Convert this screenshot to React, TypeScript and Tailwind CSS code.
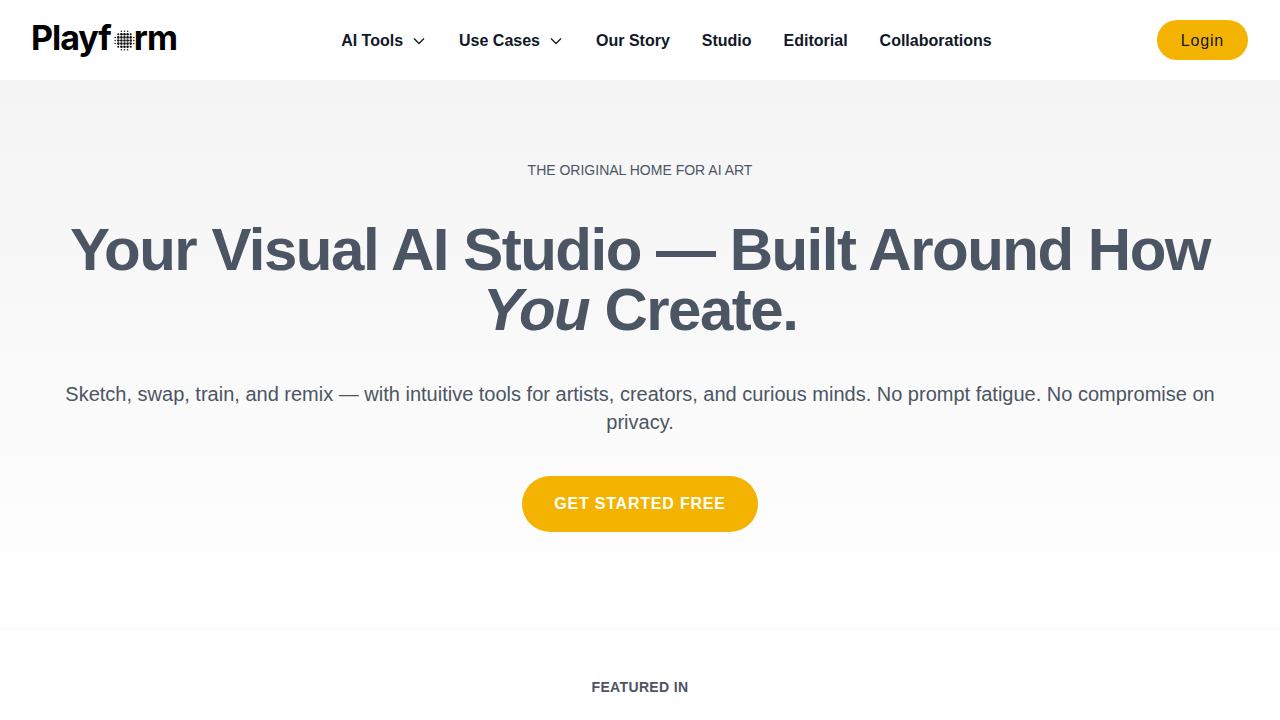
const dots: { x: number; y: number; r: number }[] = [];
for (let i = -3; i <= 3; i++) {
  for (let j = -3; j <= 3; j++) {
    const d = Math.sqrt(i * i + j * j);
    if (d > 3.4) continue;
    dots.push({ x: 10.5 + i * 3.1, y: 10.5 + j * 3.1, r: d < 2.3 ? 1.3 : d < 3 ? 1.05 : 0.75 });
  }
}

function Logo() {
  return (
    <div className="-ml-[1px] -mt-[5px] flex items-baseline text-[34px] leading-[40px] font-bold tracking-[-0.03em] text-black font-['Inter',sans-serif]">
      <span>Playf</span>
      <svg width="21" height="21" viewBox="0 0 21 21" className="ml-[3px] -mr-[1px] self-center mt-[5px]">
        {dots.map((d) => (
          <circle key={`${d.x}-${d.y}`} cx={d.x} cy={d.y} r={d.r} fill="#111" />
        ))}
      </svg>
      <span>rm</span>
    </div>
  );
}

function NavItem({ label, menu }: { label: string; menu?: boolean }) {
  return (
    <a className="flex items-center gap-2 text-base font-semibold text-gray-900">
      {label}
      {menu && (
        <svg width="16" height="16" viewBox="0 0 16 16" fill="none" stroke="currentColor" strokeWidth="1.3" className="-mt-[1px]">
          <path d="M3 5.5l5 5 5-5" />
        </svg>
      )}
    </a>
  );
}

export default function App() {
  return (
    <div className="h-[720px] overflow-hidden bg-white font-['Liberation_Sans',Arial,sans-serif]">
      <header className="flex h-20 items-center justify-between bg-white px-8">
        <Logo />
        <nav className="mt-[2px] mr-[1px] flex items-center gap-8">
          <NavItem label="AI Tools" menu />
          <NavItem label="Use Cases" menu />
          <NavItem label="Our Story" />
          <NavItem label="Studio" />
          <NavItem label="Editorial" />
          <NavItem label="Collaborations" />
        </nav>
        <button className="h-10 rounded-full bg-[#f5b301] px-6 pt-[1px] text-base tracking-wider text-gray-900">Login</button>
      </header>
      <section className="border-b border-gray-100 bg-gradient-to-b from-[#f4f4f4] to-white px-12 pt-20 pb-24 text-center">
        <p className="text-sm text-[#4b5563]">THE ORIGINAL HOME FOR AI ART</p>
        <h1 className="mt-10 text-6xl leading-[60px] font-bold tracking-tight text-[#4b5563]">
          Your Visual AI Studio — Built Around How <em>You</em> Create.
        </h1>
        <p className="mt-10 text-xl leading-7 text-[#4b5563]">
          Sketch, swap, train, and remix — with intuitive tools for artists, creators, and curious minds. No prompt fatigue. No compromise on privacy.
        </p>
        <button className="mt-10 h-14 rounded-full bg-[#f5b301] px-8 text-base font-semibold tracking-wider text-white">GET STARTED FREE</button>
      </section>
      <section className="pt-12 text-center">
        <p className="text-sm font-semibold tracking-wide text-[#4b5563]">FEATURED IN</p>
      </section>
    </div>
  );
}
